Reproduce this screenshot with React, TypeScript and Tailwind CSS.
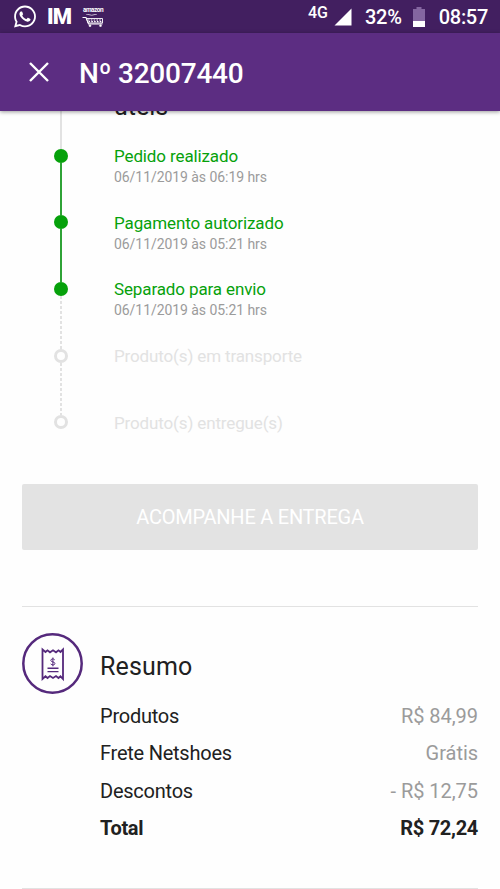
import React from 'react';
import { FaWhatsapp } from 'react-icons/fa';

const steps = [
  { title: 'Pedido realizado', date: '06/11/2019 às 06:19 hrs', done: true },
  { title: 'Pagamento autorizado', date: '06/11/2019 às 05:21 hrs', done: true },
  { title: 'Separado para envio', date: '06/11/2019 às 05:21 hrs', done: true },
  { title: 'Produto(s) em transporte', date: '', done: false },
  { title: 'Produto(s) entregue(s)', date: '', done: false },
];

const summary = [
  { label: 'Produtos', value: 'R$ 84,99' },
  { label: 'Frete Netshoes', value: 'Grátis' },
  { label: 'Descontos', value: '- R$ 12,75' },
];

const StatusBar = () => {
  return <div className="flex h-[33px] items-center justify-between bg-[#421f60] pr-[12px] pl-[13px] text-white">
      <div className="flex items-center">
        <FaWhatsapp className="h-[25px] w-[24px]" />
        <span className="ml-[10px] w-[25px] text-[22px] leading-none font-black tracking-[-1px]">IM</span>
        <div className="ml-[10px] flex w-[22px] flex-col items-center">
          <span className="text-[6.5px] leading-[7px] font-bold tracking-[-0.5px]">amazon</span>
          <svg width="22" height="13" viewBox="0 0 22 13" fill="none" stroke="white">
            <path d="M4 0Q10 2.5 15 0" strokeWidth="0.7" />
            <path d="M0.5 3.5H4L6.5 10H20.5" strokeWidth="1.1" />
            <path d="M4.5 4.5H20.5V9H6Z" strokeWidth="0.9" />
            <path d="M6 6H20M6.5 7.7H20" strokeWidth="1.2" strokeDasharray="1.6 1.2" />
            <circle cx="8" cy="11.7" r="1" fill="white" strokeWidth="0.5" />
            <circle cx="18.5" cy="11.7" r="1" fill="white" strokeWidth="0.5" />
          </svg>
        </div>
      </div>
      <div className="flex items-center">
        <span className="-mt-[7px] text-[16px] leading-none font-medium">4G</span>
        <svg className="ml-[6px]" width="18" height="18" viewBox="0 0 18 18" fill="white">
          <path d="M17.5 0.5V17.5H0.5Z" />
        </svg>
        <span className="mt-px ml-[13px] text-[20px] leading-none font-medium tracking-[-0.2px]">32%</span>
        <svg className="ml-[11px]" width="12" height="20" viewBox="0 0 12 20">
          <path d="M3.5 0H8.5V2H12V14H0V2H3.5Z" fill="#8466a0" />
          <path d="M0 14H12V20H0Z" fill="white" />
        </svg>
        <span className="mt-px ml-[14px] text-[20px] leading-none font-medium tracking-[-0.3px]">08:57</span>
      </div>
    </div>;
};

const Header = () => {
  return <header className="relative z-10 flex h-[78px] items-center bg-[#5c2d82] pl-[29px] text-white shadow-[0_1px_4px_rgba(0,0,0,0.4)]">
      <svg width="20" height="20" viewBox="0 0 20 20" fill="none" stroke="white" strokeWidth="2.4">
        <path d="M1 1L19 19M19 1L1 19" />
      </svg>
      <h1 className="mt-[3px] ml-[30px] text-[28px] leading-none font-medium tracking-[-0.22px]">Nº 32007440</h1>
    </header>;
};

const Timeline = () => {
  return <div className="pl-[54px]">
      <div className="flex h-[37.5px]">
        <div className="flex w-[14px] justify-center">
          <div className="w-[1.5px] bg-[#e2e2e2]"></div>
        </div>
        <p className="-mt-[18px] ml-[46px] text-[25px] leading-[28px] text-[#212121]">úteis</p>
      </div>
      {steps.map((step, i) => <div key={step.title} className="flex h-[66.7px]">
          <div className="flex w-[14px] flex-col items-center">
            <div className={step.done ? 'h-[14px] w-[14px] shrink-0 rounded-full bg-[#06a10b]' : 'h-[14px] w-[14px] shrink-0 rounded-full border-[3px] border-[#e2e2e2]'}></div>
            {i < 2 && <div className="w-[2px] flex-1 bg-[#2fa336]"></div>}
            {(i === 2 || i === 3) && <div className="w-[1.5px] flex-1 bg-[repeating-linear-gradient(to_bottom,#e2e2e2_0_3px,transparent_3px_5px)]"></div>}
          </div>
          <div className="-mt-[0.7px] ml-[46px]">
            <p className={step.done ? 'text-[17px] leading-[17px] tracking-[-0.12px] text-[#06a10b]' : 'text-[17px] leading-[17px] tracking-[-0.14px] text-[#e2e2e2]'}>{step.title}</p>
            {step.date && <p className="mt-[4px] text-[14px] leading-[16px] tracking-[-0.06px] text-[#9b9b9b]">{step.date}</p>}
          </div>
        </div>)}
    </div>;
};

const ReceiptIcon = () => {
  return <svg className="shrink-0" width="61" height="61" viewBox="0 0 61 61" fill="none" stroke="#55297c">
      <circle cx="30.5" cy="30.5" r="29.2" strokeWidth="2.5" />
      <g transform="translate(19 16)">
        <path d="M1.5 0.5L4.5 3L6.5 1.3L9 3.3L12 1.3L15 3.3L17.5 1.3L19.5 3L22 0.5V30L19.5 27.3L17.5 29L15 27L12 29L9 27L6.5 29L4.5 27.3L1.5 30Z" strokeWidth="1.8" />
        <path d="M13.7 10.8C12.5 9.3 9.8 9.8 9.8 11.4C9.8 13.4 13.9 12.4 13.9 14.5C13.9 16.2 11 16.5 9.7 14.9M11.9 8.5V17.3" strokeWidth="1" />
        <path d="M6.5 19.2H17.5M6.5 22.6H17.5" strokeWidth="1.4" />
      </g>
    </svg>;
};

const Summary = () => {
  return <section className="mx-[22px] mt-[56px] flex h-[283px] border-y-[1.5px] border-[#e2e2e2] pt-[26px]">
      <ReceiptIcon />
      <div className="ml-[17px] flex-1">
        <h2 className="mt-[19px] text-[25px] leading-[30px] tracking-[0.15px] text-[#212121]">Resumo</h2>
        <div className="mt-[15px]">
          {summary.map(row => <div key={row.label} className="flex h-[37.5px] items-center justify-between text-[20px]">
              <span className="tracking-[-0.24px] text-[#212121]">{row.label}</span>
              <span className="tracking-[-0.04px] text-[#9b9b9b]">{row.value}</span>
            </div>)}
          <div className="flex h-[37.5px] items-center justify-between text-[20px] font-bold tracking-[-0.3px] text-[#212121]">
            <span>Total</span>
            <span>R$ 72,24</span>
          </div>
        </div>
      </div>
    </section>;
};

export default function App() {
  return <div className="h-[889px] w-[500px] overflow-hidden bg-[#fefefe] font-['Roboto',sans-serif]">
      <StatusBar />
      <Header />
      <Timeline />
      <div className="mx-[22px] mt-[2px]">
        <button className="h-[66px] w-full rounded-[2px] bg-[#e3e3e3] text-[20px] tracking-[-0.24px] text-white">ACOMPANHE A ENTREGA</button>
      </div>
      <Summary />
    </div>;
}
